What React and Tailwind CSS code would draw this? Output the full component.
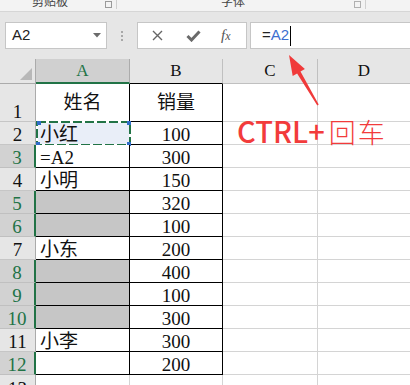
import React from 'react';

const serif = { fontFamily: '"Liberation Serif", "Noto Sans CJK SC", serif' };

const rows = [
  { n: 1, a: '姓名', b: '销量', tall: true },
  { n: 2, a: '小红', b: '100', active: true },
  { n: 3, a: '=A2', b: '300', sel: true },
  { n: 4, a: '小明', b: '150' },
  { n: 5, a: '', b: '320', sel: true, fill: true },
  { n: 6, a: '', b: '100', sel: true, fill: true },
  { n: 7, a: '小东', b: '200' },
  { n: 8, a: '', b: '400', sel: true, fill: true },
  { n: 9, a: '', b: '100', sel: true, fill: true },
  { n: 10, a: '', b: '300', sel: true, fill: true },
  { n: 11, a: '小李', b: '300' },
  { n: 12, a: '', b: '200', sel: true },
];

function Ribbon() {
  return (
    <div className="h-[12px] bg-[#f3f3f3] border-b border-[#d6d6d6] flex overflow-hidden text-[12px] text-[#444]" style={{ fontFamily: '"Noto Sans CJK SC", sans-serif' }}>
      <span className="ml-[32px] leading-[12px] -mt-[5px]">剪贴板</span>
      <span className="ml-[37px] w-[7px] h-[7px] border border-[#9a9a9a] mt-[1px]" />
      <span className="ml-[4px] w-px h-[9px] bg-[#d0d0d0]" />
      <span className="ml-[104px] leading-[12px] -mt-[5px]">字体</span>
      <span className="ml-[109px] w-[7px] h-[7px] border border-[#b0b0b0] mt-[1px]" />
      <span className="ml-[4px] w-px h-[9px] bg-[#d0d0d0]" />
    </div>
  );
}

function FormulaBar() {
  return (
    <div className="h-[47px] bg-[#e6e6e6] flex items-start pt-[10px]" style={{ fontFamily: '"Liberation Sans", sans-serif' }}>
      <div className="ml-[5px] w-[102px] h-[27px] bg-white border border-[#c6c6c6] flex items-center pl-[6px] pr-[5px] text-[15px] text-[#222]">
        <span className="flex-1">A2</span>
        <svg width="8" height="5" viewBox="0 0 8 5"><path d="M0 0 L8 0 L4 4.5 Z" fill="#6b6b6b" /></svg>
      </div>
      <div className="w-[30px] h-[27px] flex flex-col items-center justify-center gap-[2px]">
        <span className="w-[2px] h-[2px] bg-[#a8a8a8]" />
        <span className="w-[2px] h-[2px] bg-[#a8a8a8]" />
        <span className="w-[2px] h-[2px] bg-[#a8a8a8]" />
      </div>
      <div className="w-[110px] h-[27px] bg-white border border-[#c6c6c6] flex items-center">
        <svg className="ml-[14px]" width="11" height="11" viewBox="0 0 11 11"><path d="M1 1 L10 10 M10 1 L1 10" stroke="#666" strokeWidth="1.4" /></svg>
        <svg className="ml-[23px]" width="15" height="12" viewBox="0 0 15 12"><path d="M1.5 6 L5.5 10 L13.5 1.5" stroke="#6a6a6a" strokeWidth="3" fill="none" /></svg>
        <span className="ml-[20px] italic text-[15px] text-[#555]" style={serif}>f<span className="text-[12px]">x</span></span>
      </div>
      <div className="ml-[3px] flex-1 h-[27px] bg-white border border-r-0 border-[#c6c6c6] flex items-center pl-[11px] text-[15px]">
        <span className="text-[#222]">=</span>
        <span className="text-[#3c6fd0]">A2</span>
        <span className="ml-px w-px h-[20px] bg-black" />
      </div>
    </div>
  );
}

function HeaderRow() {
  return (
    <div className="flex h-[25px] text-[17px]" style={serif}>
      <div className="w-[36px] bg-[#e6e6e6] border-r border-b border-[#ababab] flex items-end justify-end p-[3px]">
        <svg width="12" height="12" viewBox="0 0 12 12"><path d="M12 0 L12 12 L0 12 Z" fill="#b8b8b8" /></svg>
      </div>
      <div className="w-[94px] bg-[#d0d0d0] border-r border-[#ababab] border-b-2 border-b-[#217346] flex items-end justify-center leading-[18px] pb-[2px] text-[#217346]">A</div>
      <div className="w-[93px] bg-[#e6e6e6] border-r border-b border-[#c0c0c0] border-b-black flex items-end justify-center leading-[18px] pb-[3px] text-[#111]">B</div>
      <div className="w-[95px] bg-[#e6e6e6] border-r border-b border-[#c0c0c0] flex items-end justify-center leading-[18px] pb-[3px] text-[#111]">C</div>
      <div className="flex-1 bg-[#e6e6e6] border-b border-[#c0c0c0] flex items-end justify-center leading-[18px] pb-[3px] text-[#111]">D</div>
    </div>
  );
}

function Row({ r }) {
  const h = r.tall ? 'h-[38px]' : 'h-[23px]';
  return (
    <div className={`flex ${h} text-[19px]`}>
      <div className={r.sel
        ? 'w-[36px] bg-[#d2d2d2] text-[#217346] border-b border-b-[#c0c0c0] border-r-2 border-r-[#217346] flex items-end justify-center leading-[18px]'
        : 'w-[36px] bg-[#e6e6e6] text-[#111] border-b border-b-[#c6c6c6] border-r border-r-[#ababab] flex items-end justify-center leading-[18px]'} style={serif}>
        {r.n}
      </div>
      <div className={`relative w-[94px] border-r border-b border-black flex ${r.tall ? 'items-center justify-center' : 'items-end pl-[4px]'} leading-[18px] text-[#111] ${r.fill ? 'bg-[#c6c6c6]' : r.active ? 'bg-[#e9eef8]' : 'bg-white'}`}
        style={serif}>
        {r.a}
        {r.active && (
          <div className="absolute -top-px left-0 w-[95px] h-[25px] pointer-events-none">
            <svg className="absolute inset-0" width="95" height="25" viewBox="0 0 95 25">
              <rect x="1" y="1" width="93" height="23" fill="none" stroke="#fff" strokeWidth="2" />
              <rect x="1" y="1" width="93" height="23" fill="none" stroke="#217346" strokeWidth="2" strokeDasharray="9 3" />
              <rect x="1" y="0" width="4" height="4" fill="#2f6cc8" />
              <rect x="91" y="-1" width="5" height="5" fill="#2f6cc8" />
              <rect x="91" y="21" width="5" height="5" fill="#2f6cc8" />
              <rect x="0" y="21" width="4" height="4" fill="#2f6cc8" />
            </svg>
          </div>
        )}
      </div>
      <div className={`w-[93px] border-r border-b border-black bg-white flex justify-center ${r.tall ? 'items-center' : 'items-end'} leading-[18px] text-[#111]`} style={serif}>
        {r.b}
      </div>
      <div className="w-[95px] border-r border-b border-[#d4d4d4] bg-white" />
      <div className="flex-1 border-b border-[#d4d4d4] bg-white" />
    </div>
  );
}

export default function App() {
  return (
    <div className="relative w-[410px] h-[385px] overflow-hidden bg-white">
      <Ribbon />
      <FormulaBar />
      <HeaderRow />
      {rows.map(r => <Row key={r.n} r={r} />)}
      <div className="flex h-[23px] text-[19px]">
        <div className="w-[36px] bg-[#e6e6e6] text-[#111] border-r border-[#ababab] flex items-end justify-center leading-[18px]" style={serif}>13</div>
        <div className="w-[94px] border-r border-[#d4d4d4]" />
        <div className="w-[93px] border-r border-[#d4d4d4]" />
        <div className="w-[95px] border-r border-[#d4d4d4]" />
        <div className="flex-1" />
      </div>

      <div className="absolute left-[237px] top-[116px] leading-none text-[#f23b3b] whitespace-nowrap flex items-baseline" style={{ fontFamily: '"Noto Sans CJK SC", sans-serif' }}>
        <span className="text-[29px] font-medium">CTRL+</span>
        <span className="ml-[4px] text-[27px] font-light tracking-[2px]">回车</span>
      </div>

      <svg className="absolute inset-0 pointer-events-none" width="410" height="385" viewBox="0 0 410 385">
        <path d="M289 55 L304.9 69.1 L300.5 71.5 L318.7 104.6 L317.3 105.4 L297.1 73.5 L292.7 75.9 Z" fill="#f03a3a" />
      </svg>
    </div>
  );
}
